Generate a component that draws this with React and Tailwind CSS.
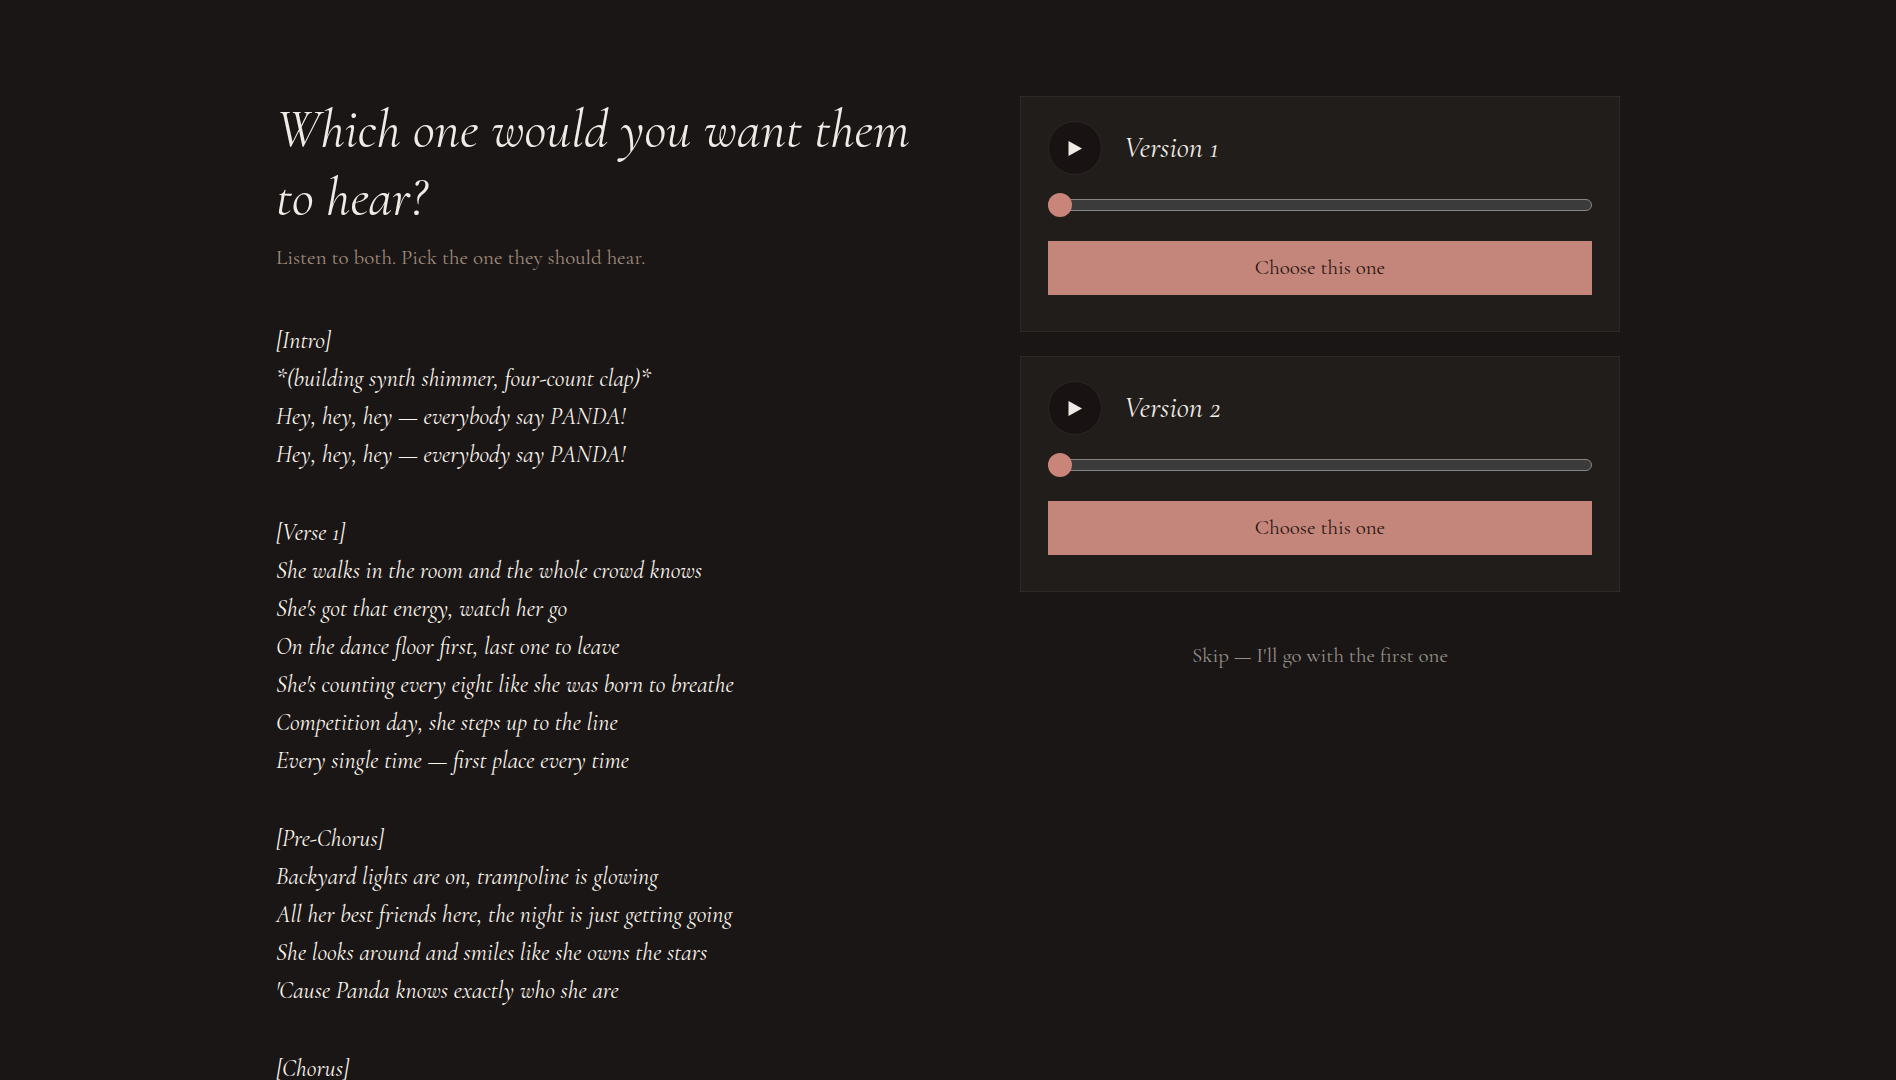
import React, { useState } from "react";

const lyrics = [
  [
    "[Intro]",
    "*(building synth shimmer, four-count clap)*",
    "Hey, hey, hey — everybody say PANDA!",
    "Hey, hey, hey — everybody say PANDA!",
  ],
  [
    "[Verse 1]",
    "She walks in the room and the whole crowd knows",
    "She's got that energy, watch her go",
    "On the dance floor first, last one to leave",
    "She's counting every eight like she was born to breathe",
    "Competition day, she steps up to the line",
    "Every single time — first place every time",
  ],
  [
    "[Pre-Chorus]",
    "Backyard lights are on, trampoline is glowing",
    "All her best friends here, the night is just getting going",
    "She looks around and smiles like she owns the stars",
    "'Cause Panda knows exactly who she are",
  ],
  ["[Chorus]"],
];

const versions = [
  { id: 1, title: "Version 1" },
  { id: 2, title: "Version 2" },
];

const App = () => {
  return (
    <main className="min-h-screen bg-[#1a1615] px-6 pt-24 font-['Cormorant_Garamond','Liberation_Serif',serif] text-[#f0ebe6]">
      <div className="mx-auto grid max-w-[1344px] items-start gap-12 lg:grid-cols-[27fr_25fr] lg:gap-24">
        {/* Title and lyrics */}
        <section>
          <h1 className="text-[54px] italic leading-[68px]">Which one would you want them to hear?</h1>
          <p className="mt-3 text-[21px] leading-7 text-[#a08c7d]">
            Listen to both. Pick the one they should hear.
          </p>
          <div className="mt-[50px] flex flex-col gap-10 text-2xl italic leading-[38px] text-[#faf5ee]">
            {lyrics.map((stanza, i) => (
              <div key={i}>
                {stanza.map((line, j) => (
                  <p key={j}>{line}</p>
                ))}
              </div>
            ))}
          </div>
        </section>

        {/* Versions to pick from */}
        <section className="flex flex-col gap-6">
          {versions.map((version) => (
            <VersionCard key={version.id} id={version.id} title={version.title} />
          ))}
          <button type="button" className="mt-6 self-center text-[21px] leading-8 text-[#96908a]">
            Skip — I'll go with the first one
          </button>
        </section>
      </div>
    </main>
  );
};

// Player card with a seek bar and a choose button
const VersionCard = ({ id, title }) => {
  const [position, setPosition] = useState(0);

  return (
    <article className="border border-[#2d2926] bg-[#211d1a] px-[27px] pt-6 pb-9">
      <div className="flex items-center gap-[22px]">
        <button
          type="button"
          aria-label={`Play ${title}`}
          className="flex size-[54px] items-center justify-center rounded-full border border-[#2a2624] bg-[#181312]"
        >
          <svg viewBox="0 0 14 15" className="h-[15px] w-3.5 fill-[#f0ebe6]">
            <path d="M0.5 0 L14 7.5 L0.5 15 Z" />
          </svg>
        </button>
        <label htmlFor={`seek-${id}`} className="text-3xl italic">
          {title}
        </label>
      </div>
      <input
        id={`seek-${id}`}
        type="range"
        min="0"
        max="100"
        value={position}
        onChange={(e) => setPosition(Number(e.target.value))}
        className="mt-[18px] block h-6 w-full cursor-pointer appearance-none bg-transparent [&::-webkit-slider-runnable-track]:h-3 [&::-webkit-slider-runnable-track]:rounded-full [&::-webkit-slider-runnable-track]:border [&::-webkit-slider-runnable-track]:border-[#858585] [&::-webkit-slider-runnable-track]:bg-[#3b3b3b] [&::-webkit-slider-thumb]:-mt-[7px] [&::-webkit-slider-thumb]:-ml-px [&::-webkit-slider-thumb]:size-6 [&::-webkit-slider-thumb]:appearance-none [&::-webkit-slider-thumb]:rounded-full [&::-webkit-slider-thumb]:bg-[#c9857a]"
      />
      <button type="button" className="mt-6 h-[54px] w-full bg-[#c4867a] text-[21px] text-[#2b1512]">
        Choose this one
      </button>
    </article>
  );
};

export default App;
